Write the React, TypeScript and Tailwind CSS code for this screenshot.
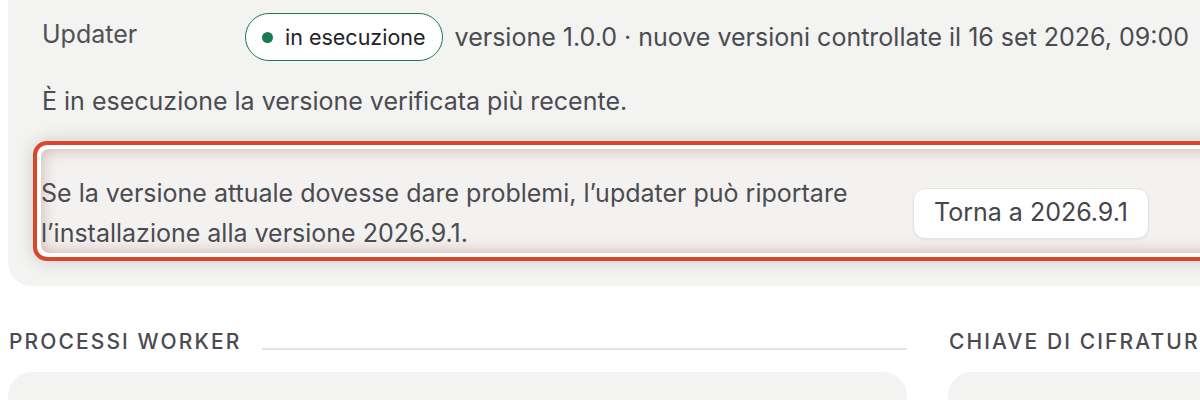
import React from "react";

interface UpdaterInfo {
  status: string;
  version: string;
  checkedAt: string;
  rollbackVersion: string;
}

const info: UpdaterInfo = {
  status: "in esecuzione",
  version: "1.0.0",
  checkedAt: "16 set 2026, 09:00",
  rollbackVersion: "2026.9.1",
};

function SectionHeader({ title, line = false }: { title: string; line?: boolean }) {
  return (
    <div className="flex items-center h-[28px]">
      <div className="text-[21px] font-medium tracking-[0.1em] text-[#4a4a52] whitespace-nowrap pl-px">
        {title}
      </div>
      {line && <div className="flex-1 ml-[20px] mt-[14px] h-[2px] bg-[#e4e4e2]" />}
    </div>
  );
}

export default function App() {
  return (
    <div className="w-[1200px] h-[400px] overflow-hidden bg-white font-[Inter,'Liberation_Sans',sans-serif]">
      <div className="w-[1400px] pl-[8px]">
        {/* Updater card */}
        <div className="w-[1380px] bg-[#f3f3f1] rounded-b-[24px] pl-[34px] pt-[13px] pb-[25px]">
          <div className="flex items-start">
            <div className="w-[203px] text-[25px] leading-[40px] text-[#505056] mt-[1px]">Updater</div>
            <span className="inline-flex items-center h-[48px] px-[16px] rounded-full border-[1.5px] border-[#1f7a55] bg-white">
              <span className="w-[11px] h-[11px] rounded-full bg-[#1b7a52] mr-[12px]" />
              <span className="text-[21.5px] text-[#222226]">{info.status}</span>
            </span>
            <span className="ml-[12px] text-[25px] leading-[48px] text-[#4b4b52] whitespace-nowrap">
              versione {info.version} · nuove versioni controllate il {info.checkedAt}
            </span>
          </div>

          <p className="mt-[20px] text-[25px] leading-[40px] text-[#4b4b52]">
            È in esecuzione la versione verificata più recente.
          </p>

          {/* highlighted rollback row */}
          <div className="mt-[20px] -ml-[9px] rounded-[14px] border-4 border-[#d9472b] bg-white p-[4px] shadow-[0_0_18px_rgba(0,0,0,0.16)]">
            <div className="flex items-center rounded-[8px] bg-[#f3f2f0] pt-[24px] shadow-[inset_0_0_16px_rgba(140,75,55,0.38)]">
              <p className="w-[830px] text-[25px] leading-[40px] text-[#4b4b52]">
                Se la versione attuale dovesse dare problemi, l’updater può riportare l’installazione alla versione{" "}
                {info.rollbackVersion}.
              </p>
              <button className="ml-[42px] h-[51px] px-[20px] rounded-[12px] border border-[#e2e2e0] bg-white text-[25px] text-[#45454c] shadow-[0_1px_2px_rgba(0,0,0,0.05)] whitespace-nowrap">
                Torna a {info.rollbackVersion}
              </button>
            </div>
          </div>
        </div>

        {/* lower sections */}
        <div className="grid grid-cols-[899px_440px] gap-x-[41px] mt-[42px]">
          <SectionHeader title="PROCESSI WORKER" line />
          <SectionHeader title="CHIAVE DI CIFRATURA" />
          <div className="mt-[16px] h-[200px] rounded-[24px] bg-[#f3f3f1]" />
          <div className="mt-[16px] h-[200px] rounded-[24px] bg-[#f3f3f1]" />
        </div>
      </div>
    </div>
  );
}
